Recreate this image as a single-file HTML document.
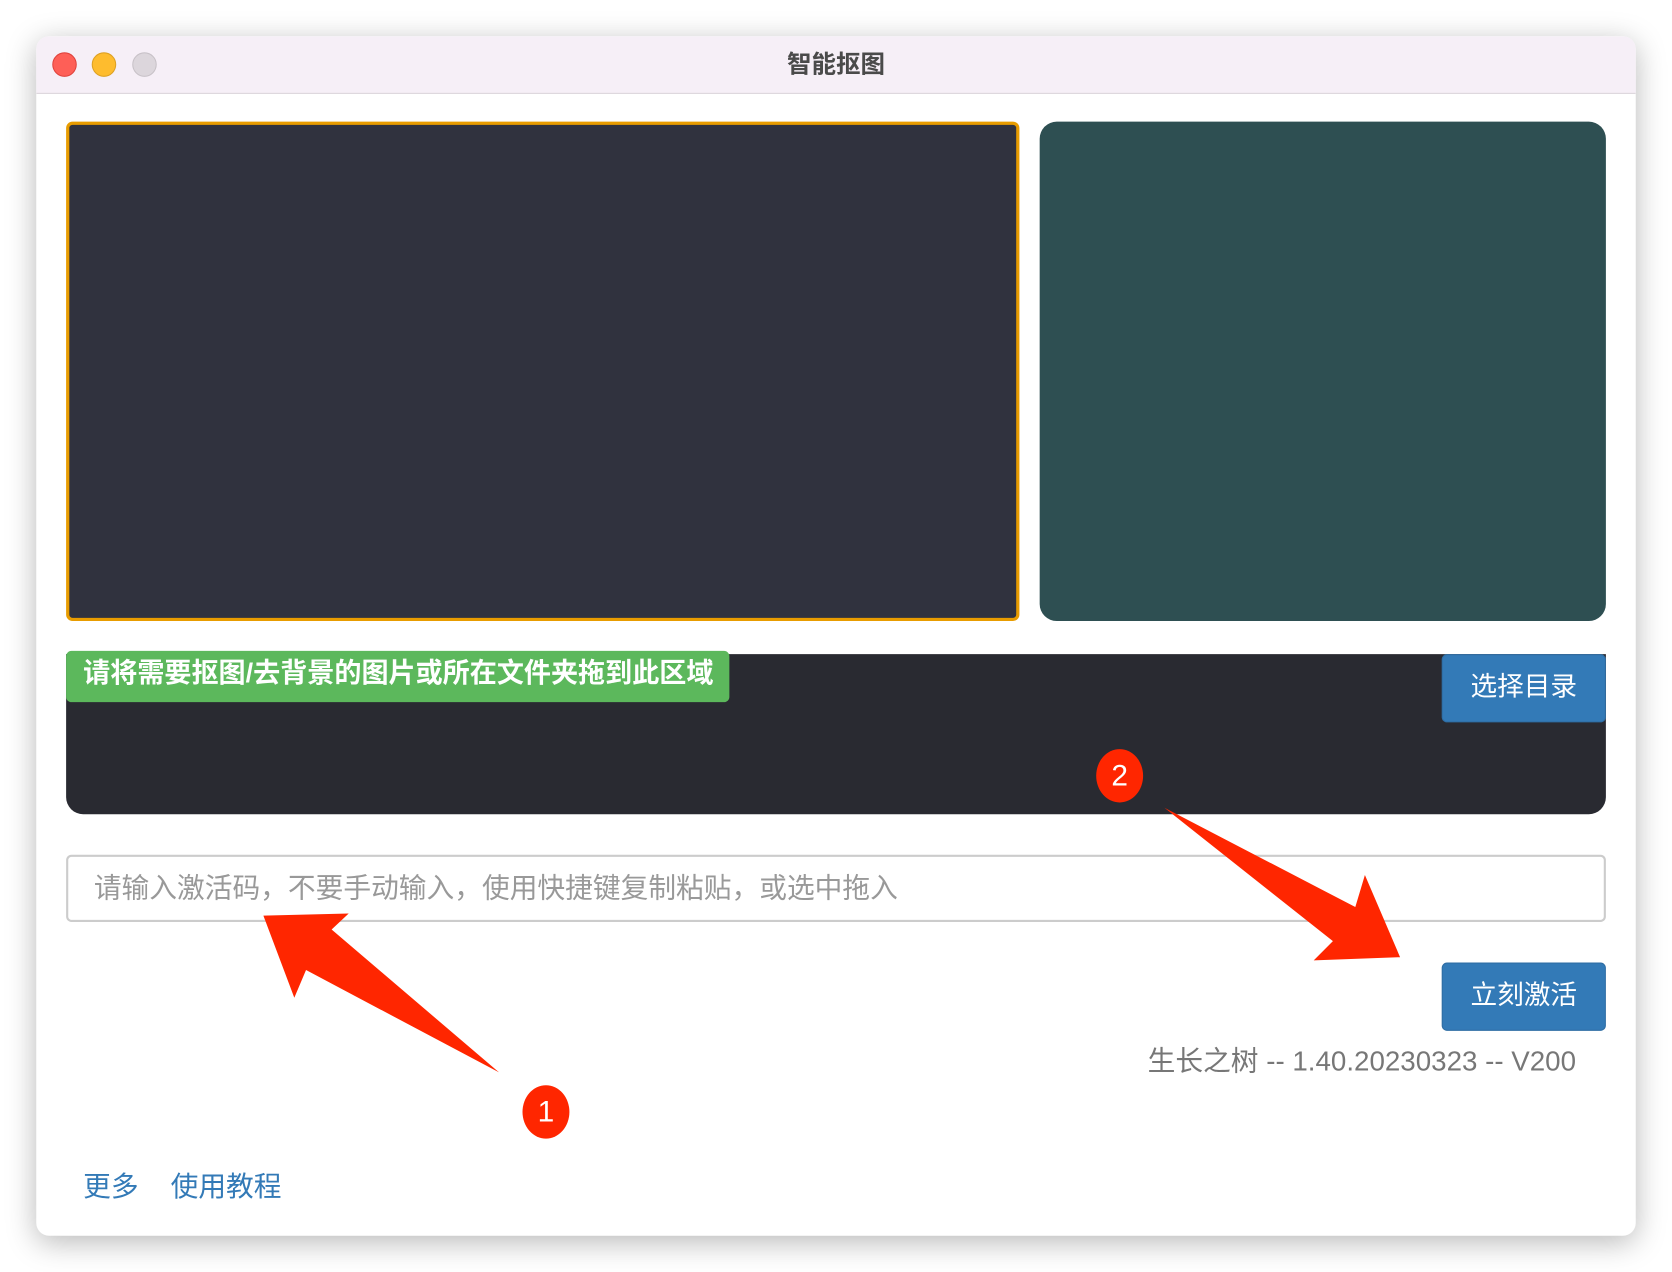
<!DOCTYPE html>
<html><head><meta charset="utf-8"><style>
html,body{margin:0;padding:0;background:#fff;width:1672px;height:1272px;overflow:hidden}
#s{position:absolute;left:0;top:0;width:1568px;height:1192px;transform:scale(1.06633,1.0671);transform-origin:0 0;font-family:"Liberation Sans","Noto Sans CJK SC",sans-serif}
.a{position:absolute}
.win{left:34px;top:34px;width:1500px;height:1124px;border-radius:12px;background:#fff;box-shadow:0 6px 28px rgba(0,0,0,.28);overflow:hidden}
.tb{left:0;top:0;width:1500px;height:53px;background:#f6eff7;border-bottom:1px solid #dcd6dc}
.dot{width:23px;height:23px;border-radius:50%;top:15px}
.btn{background:#337ab7;border:1px solid #2e6da4;border-radius:5px;color:#fff;font-size:25px;text-align:center;box-sizing:border-box}
.badge{width:44px;height:50px;border-radius:50%;background:#ff2600;color:#fff;font-size:28px;text-align:center;line-height:50px}
</style></head><body><div id="s">
<div class="a win">
 <div class="a tb">
  <div class="a dot" style="left:15px;background:#fe5f57;border:1px solid #e0443e;box-sizing:border-box"></div>
  <div class="a dot" style="left:52px;background:#febc2e;border:1px solid #dea123;box-sizing:border-box"></div>
  <div class="a dot" style="left:90px;background:#dcd6dc;border:1px solid #c8c2c8;box-sizing:border-box"></div>
  <div class="a" style="left:0;width:1500px;top:7px;text-align:center;font-size:23px;font-weight:bold;color:#4a4a4a">智能抠图</div>
 </div>
 <div class="a" style="left:28px;top:80px;width:894px;height:468px;box-sizing:border-box;border:3px solid #e89c00;border-radius:6px;background:#30323e"></div>
 <div class="a" style="left:941px;top:80px;width:531px;height:468px;border-radius:16px;background:#2e4f52"></div>
 <div class="a" style="left:28px;top:579px;width:1444px;height:150px;border-radius:0 0 16px 16px;background:#292a31"></div>
 <div class="a" style="left:28px;top:576px;width:622px;height:48px;border-radius:5px;background:#5cb85c;color:#fff;font-size:25.4px;font-weight:bold;line-height:42px;padding-left:16px;box-sizing:border-box;white-space:nowrap">请将需要抠图/去背景的图片或所在文件夹拖到此区域</div>
 <div class="a btn" style="left:1318px;top:579px;width:154px;height:64px;line-height:60px">选择目录</div>
 <div class="a" style="left:28px;top:767px;width:1444px;height:63px;box-sizing:border-box;border:2px solid #ccc;border-radius:5px;color:#999;font-size:26px;line-height:58px;padding-left:24px;white-space:nowrap">请输入激活码，不要手动输入，使用快捷键复制粘贴，或选中拖入</div>
 <div class="a btn" style="left:1318px;top:868px;width:154px;height:64px;line-height:60px">立刻激活</div>
 <div class="a" style="right:56px;top:940px;font-size:26px;color:#777;white-space:nowrap">生长之树 -- 1.40.20230323 -- V200</div>
 <div class="a" style="left:44px;top:1058px;font-size:26px;color:#337ab7">更多</div>
 <div class="a" style="left:126px;top:1058px;font-size:26px;color:#337ab7">使用教程</div>
</div>
<svg class="a" style="left:0;top:0" width="1568" height="1192">
 <polygon fill="#ff2600" points="247,858 327,856 311,871 468,1005 287,909 276,935"/>
 <polygon fill="#ff2600" points="1092,757 1271,850 1280,820 1313,897 1232,900 1250,882"/>
</svg>
<div class="a badge" style="left:1028px;top:702px">2</div>
<div class="a badge" style="left:490px;top:1017px">1</div>
</div></body></html>
